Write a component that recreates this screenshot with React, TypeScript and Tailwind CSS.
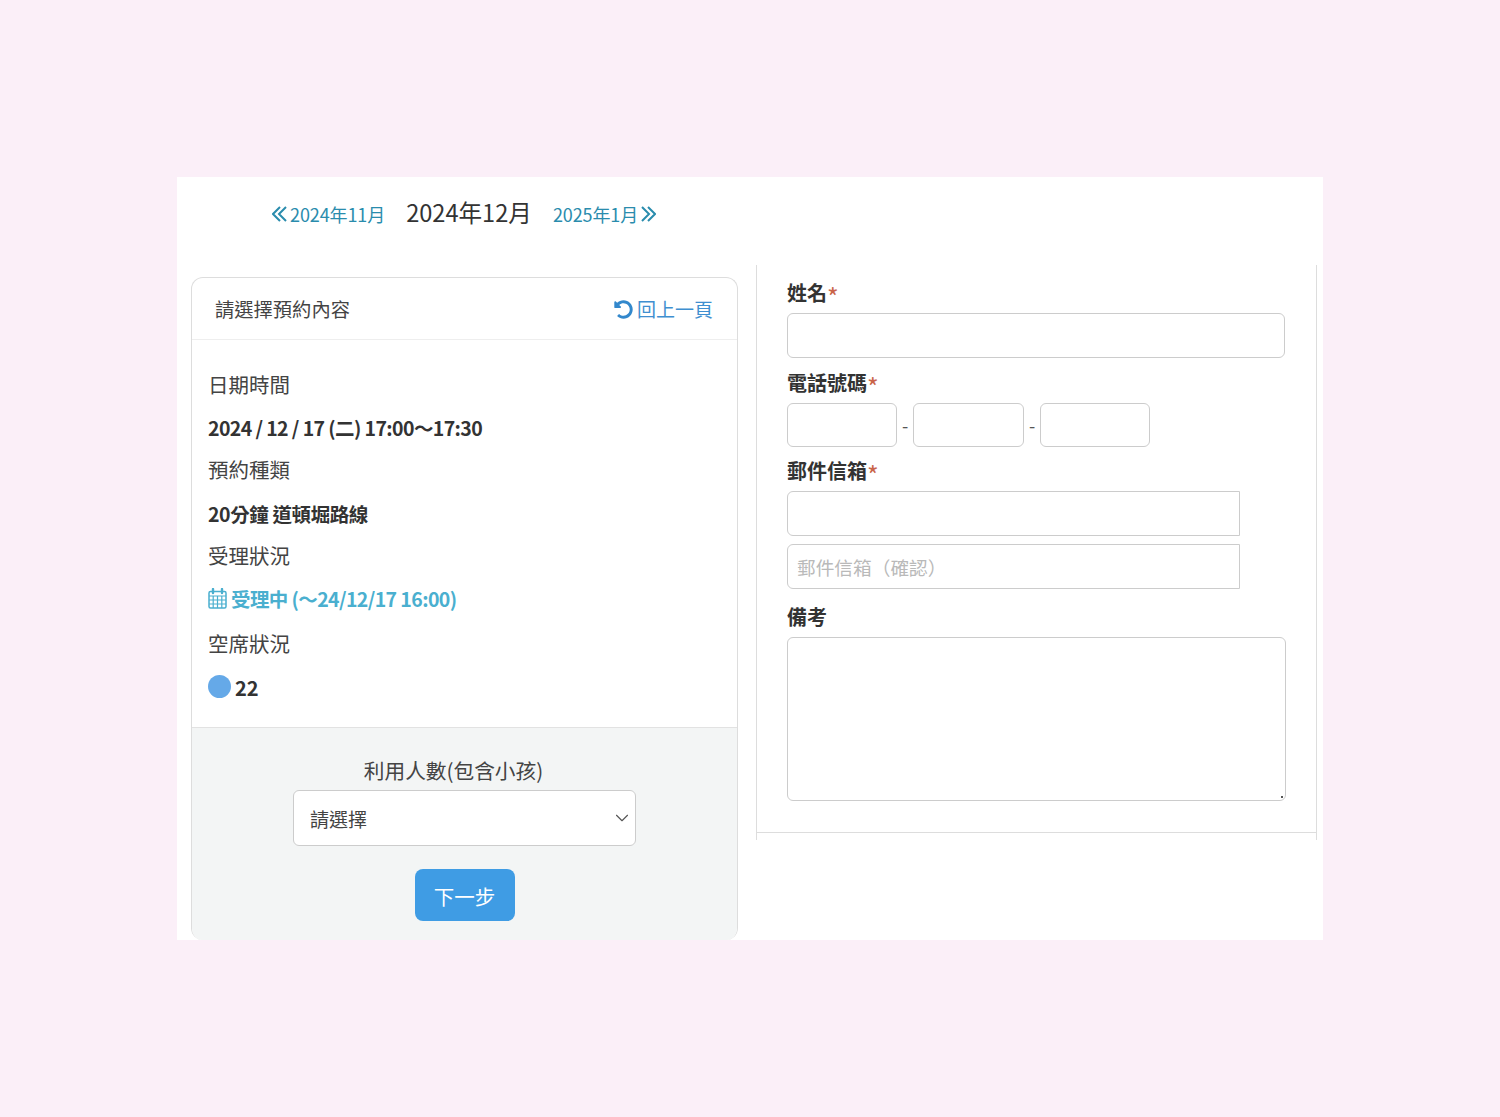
import { FaUndoAlt } from "react-icons/fa";
import { ChevronDown } from "lucide-react";

const inputClass =
  "h-full w-full rounded-md border border-[#cccccc] bg-white px-[9px] text-[19px] text-[#333] outline-none placeholder:text-[18.7px] placeholder:text-[#b9b9b9]";

const labelClass = "flex h-[30px] items-center text-[20px] leading-none font-bold text-[#333]";

const CalendarIcon = () => (
  <svg width="19" height="21" viewBox="0 0 19 21" fill="none" stroke="#4aafcf" strokeWidth="1.5">
    <rect x="1" y="3.5" width="17" height="16.5" rx="1.5" />
    <path d="M1 8h17M1 12h17M1 16h17M5.2 8v12M9.5 8v12M13.8 8v12" strokeWidth="1.2" />
    <path d="M5 1v4M14 1v4" strokeWidth="2.4" strokeLinecap="round" />
  </svg>
);

// thin double chevrons used by the month links
const DoubleChevron = ({ right = false }: { right?: boolean }) => (
  <svg width="15" height="16" viewBox="0 0 15 16" fill="none" stroke="currentColor" strokeWidth="2">
    <path d={right ? "M1 1l7 7-7 7M7 1l7 7-7 7" : "M14 1L7 8l7 7M8 1L1 8l7 7"} />
  </svg>
);

const Required = () => <span className="h-[20px] text-[25px] leading-[26px] font-normal text-[#c9644a]">*</span>;

const App = () => {
  return (
    <div className="h-[1117px] bg-[#fbeff8] px-[177px] pt-[177px] font-['Noto_Sans_CJK_TC','Noto_Sans',sans-serif] text-[#333]">
      <div className="h-[763px] bg-white">
        {/* month switcher */}
        <div className="flex h-[88px] items-center pb-[14px] pl-[95px]">
          <a className="flex items-center gap-[3px] text-[18px] tracking-[-0.1px] text-[#2a8cad]">
            <DoubleChevron />
            2024年11月
          </a>
          <h2 className="mx-[21px] mb-[2px] text-[23.6px] leading-none">2024年12月</h2>
          <a className="flex items-center gap-[3px] text-[18px] tracking-[-0.1px] text-[#2a8cad]">
            2025年1月
            <DoubleChevron right />
          </a>
        </div>

        <div className="flex items-start">
          {/* reservation card */}
          <div className="mt-3 ml-[14px] flex h-[663px] w-[547px] flex-col overflow-hidden rounded-xl border border-b-0 border-[#dddddd]">
            <div className="flex h-[62px] shrink-0 items-center justify-between border-b border-[#eeeeee] pt-[2px] pr-6 pl-[23px]">
              <span className="text-[19.3px] text-[#444]">請選擇預約內容</span>
              <a className="flex items-center text-[19px] text-[#3f8fd0]">
                <FaUndoAlt className="mr-[4px] h-[19px] w-[19px] text-[#3388cc]" />
                回上一頁
              </a>
            </div>

            <div className="h-[388px] shrink-0 border-b border-[#e2e2e2] px-4 pt-[23px] text-[20.5px]">
              <div className="flex h-[43px] items-center text-[#444]">日期時間</div>
              <div className="flex h-[44px] items-center text-[19.5px] font-bold tracking-[-0.6px]">
                2024 / 12 / 17 (二) 17:00〜17:30
              </div>
              <div className="flex h-[41px] items-center pb-[2px] text-[#444]">預約種類</div>
              <div className="flex h-[45px] items-center text-[19.5px] font-bold tracking-[-0.4px]">
                20分鐘 道頓堀路線
              </div>
              <div className="flex h-[41px] items-center pb-[2px] text-[#444]">受理狀況</div>
              <div className="flex h-[45px] items-center gap-[4px] pb-[2px] text-[19.5px] font-bold tracking-[-0.6px] text-[#4aafcf]">
                <CalendarIcon />
                受理中 (〜24/12/17 16:00)
              </div>
              <div className="flex h-[45px] items-center pb-[2px] text-[#444]">空席狀況</div>
              <div className="flex h-[43px] items-center gap-[4px] pb-[2px] text-[20px] font-bold">
                <span className="mb-[2px] h-[23px] w-[23px] rounded-full bg-[#65a9e8]" />
                22
              </div>
            </div>

            <div className="flex flex-1 flex-col items-center bg-[#f3f5f5] pt-[25px]">
              <div className="flex h-[34px] items-center pr-[22px] text-[20.7px] leading-none text-[#444]">
                利用人數(包含小孩)
              </div>
              <div className="relative mt-[3px] h-[56px] w-[343px]">
                <select className="h-full w-full appearance-none rounded-md border border-[#cccccc] bg-white px-4 pt-[2px] text-[19px] text-[#444] outline-none">
                  <option>請選擇</option>
                </select>
                <ChevronDown className="absolute top-[17px] right-[3px] h-[22px] w-[22px] text-[#555]" strokeWidth={1.25} />
              </div>
              <button className="mt-[23px] h-[52px] w-[100px] rounded-lg bg-[#3f9ce4] pt-[3px] text-[20.5px] text-white">
                下一步
              </button>
            </div>
          </div>

          {/* customer form */}
          <div className="ml-[18px] h-[575px] w-[561px] border-x border-[#dddddd]">
            <div className="h-[568px] border-b border-[#dddddd] pt-[13px] pl-[30px]">
              <label className={labelClass}>
                姓名
                <Required />
              </label>
              <div className="mt-[5px] h-[45px] w-[498px]">
                <input className={inputClass} />
              </div>

              <label className={`${labelClass} mt-[10px]`}>
                電話號碼
                <Required />
              </label>
              <div className="mt-[5px] flex h-[44px] items-center">
                <div className="h-full w-[110px]">
                  <input className={inputClass} />
                </div>
                <span className="w-[16px] text-center text-[18px] text-[#555]">-</span>
                <div className="h-full w-[111px]">
                  <input className={inputClass} />
                </div>
                <span className="w-[16px] text-center text-[18px] text-[#555]">-</span>
                <div className="h-full w-[110px]">
                  <input className={inputClass} />
                </div>
              </div>

              <label className={`${labelClass} mt-[9px]`}>
                郵件信箱
                <Required />
              </label>
              <div className="mt-[5px] h-[45px] w-[453px]">
                <input className={`${inputClass} rounded-r-none`} />
              </div>
              <div className="mt-[8px] h-[45px] w-[453px]">
                <input className={`${inputClass} rounded-r-none`} placeholder="郵件信箱（確認）" />
              </div>

              <label className={`${labelClass} mt-[13px]`}>備考</label>
              <div className="relative mt-[5px] h-[164px] w-[499px]">
                <textarea className={`${inputClass} block resize-none`} />
                <span className="absolute right-[3px] bottom-[3px] h-[2px] w-[2px] bg-[#555]" />
              </div>
            </div>
          </div>
        </div>
      </div>
    </div>
  );
};

export default App;
